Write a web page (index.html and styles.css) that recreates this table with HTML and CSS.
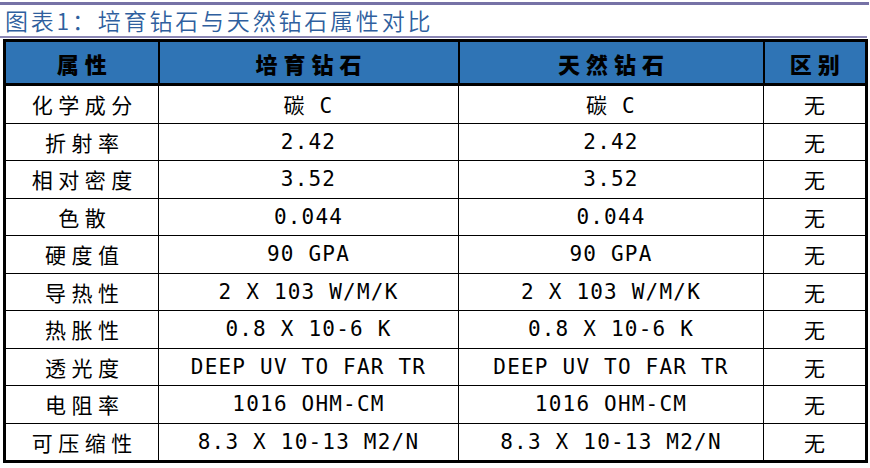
FILE: index.html
```html
<!DOCTYPE html>
<html lang="zh">
<head>
<meta charset="utf-8">
<link rel="stylesheet" href="styles.css">
</head>
<body>
<div class="page">
  <div class="rule-top"></div>
  <div class="title">图表1：培育钻石与天然钻石属性对比</div>
  <div class="rule-bottom"></div>
  <table class="cmp">
    <colgroup>
      <col class="c1"><col class="c2"><col class="c3"><col class="c4">
    </colgroup>
    <thead>
      <tr><th>属性</th><th>培育钻石</th><th>天然钻石</th><th>区别</th></tr>
    </thead>
    <tbody>
      <tr><td class="zh">化学成分</td><td class="en"><span class="zh-in">碳</span> C</td><td class="en"><span class="zh-in">碳</span> C</td><td class="zh">无</td></tr>
      <tr><td class="zh">折射率</td><td class="en">2.42</td><td class="en">2.42</td><td class="zh">无</td></tr>
      <tr><td class="zh">相对密度</td><td class="en">3.52</td><td class="en">3.52</td><td class="zh">无</td></tr>
      <tr><td class="zh">色散</td><td class="en">0.044</td><td class="en">0.044</td><td class="zh">无</td></tr>
      <tr><td class="zh">硬度值</td><td class="en">90 GPA</td><td class="en">90 GPA</td><td class="zh">无</td></tr>
      <tr><td class="zh">导热性</td><td class="en">2 X 103 W/M/K</td><td class="en">2 X 103 W/M/K</td><td class="zh">无</td></tr>
      <tr><td class="zh">热胀性</td><td class="en">0.8 X 10-6 K</td><td class="en">0.8 X 10-6 K</td><td class="zh">无</td></tr>
      <tr><td class="zh">透光度</td><td class="en">DEEP UV TO FAR TR</td><td class="en">DEEP UV TO FAR TR</td><td class="zh">无</td></tr>
      <tr><td class="zh">电阻率</td><td class="en">1016 OHM-CM</td><td class="en">1016 OHM-CM</td><td class="zh">无</td></tr>
      <tr><td class="zh">可压缩性</td><td class="en">8.3 X 10-13 M2/N</td><td class="en">8.3 X 10-13 M2/N</td><td class="zh">无</td></tr>
    </tbody>
  </table>
</div>
</body>
</html>
```
FILE: styles.css
```css
html, body {
  margin: 0;
  padding: 0;
  background: #ffffff;
}
.page {
  width: 870px;
  padding-top: 2px;
}
.rule-top {
  height: 3px;
  background: #7672a6;
  margin-right: 1px;
}
.title {
  height: 31px;
  line-height: 31px;
  padding-left: 5px;
  font-family: "Noto Sans CJK SC", sans-serif;
  font-size: 23px;
  letter-spacing: 2.8px;
  color: #2f5f9e;
  font-weight: 350;
}
.rule-bottom {
  height: 2px;
  background: #8a86b4;
  margin-right: 3px;
  margin-bottom: 1px;
}
.cmp {
  margin-left: 3px;
  width: 862px;
  border-collapse: collapse;
  border: 3px solid #000;
  table-layout: fixed;
}
.c1 { width: 154px; }
.c2 { width: 300px; }
.c3 { width: 305px; }
.c4 { width: 103px; }
.cmp th {
  height: 41px;
  padding: 0;
  background: #2f74b5;
  color: #000;
  font-family: "Noto Sans CJK SC", sans-serif;
  font-weight: 900;
  font-size: 22px;
  letter-spacing: 6px;
  text-indent: 6px;
  border: 2px solid #000;
  border-bottom-width: 3px;
  text-align: center;
}
.cmp td {
  height: 36.5px;
  padding: 0;
  border: 1.5px solid #000;
  text-align: center;
  color: #000;
}
.cmp td.zh {
  font-family: "Noto Sans CJK SC", sans-serif;
  font-size: 21px;
  letter-spacing: 5.5px;
  text-indent: 5.5px;
}
.cmp td.en {
  font-family: "DejaVu Sans Mono", "Noto Sans CJK SC", monospace;
  font-size: 21px;
  letter-spacing: 1.2px;
}
.zh-in {
  font-family: "Noto Sans CJK SC", sans-serif;
}
```
